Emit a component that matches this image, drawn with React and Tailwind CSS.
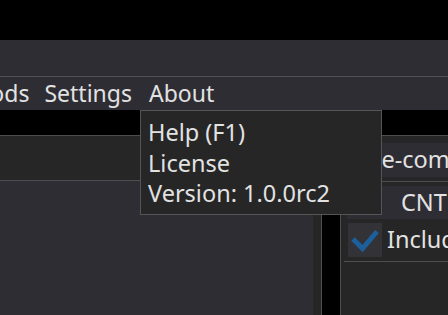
export default function App() {
  return (
    <div className="relative w-[448px] h-[315px] overflow-hidden bg-black flex flex-col font-['Noto_Sans',sans-serif] text-[23.5px] text-[#e2e2e2] whitespace-nowrap">
      <div className="h-[40px] shrink-0 bg-black" />
      <div className="h-[37px] shrink-0 bg-[#2e2d33] border-b border-[#505055]" />
      <div className="h-[33px] shrink-0 bg-[#2e2d33] flex items-center gap-[18px] text-[23px]">
        <span className="ml-[-66px]">Methods</span>
        <span className="ml-[-3px]">Settings</span>
        <span className="ml-[-1px]">About</span>
      </div>
      <div className="flex-1 flex min-h-0">
        <div className="w-[322px] flex flex-col">
          <div className="h-[25px] bg-black" />
          <div className="h-[46px] bg-[#262626] border-y border-[#4e4e4e]" />
          <div className="flex-1 flex">
            <div className="flex-1 bg-[#2e2d33]" />
            <div className="w-[8px] bg-[#262626]" />
            <div className="w-px bg-[#4e4e4e]" />
          </div>
        </div>
        <div className="w-[18px] bg-black" />
        <div className="flex-1 flex flex-col border-l border-[#4e4e4e] min-w-0">
          <div className="h-[25px] bg-black" />
          <div className="flex-1 bg-[#262626] border-t border-[#4e4e4e] flex flex-col overflow-hidden">
            <div className="mt-[7px] ml-[6px] h-[34px] bg-[#2e2d33] flex items-center pl-[11px]">Pre-compute</div>
            <div className="mt-[4px] ml-[3px] h-px bg-[#4e4e4e]" />
            <div className="mt-[4px] ml-[6px] h-[33px] bg-[#2e2d33] flex items-center pl-[54px]">CNT</div>
            <div className="mt-[4px] ml-[7px] h-[34px] flex items-center gap-[5px]">
              <div className="w-[34px] h-[34px] bg-[#323237] flex items-center justify-center shrink-0">
                <svg width="34" height="34" viewBox="0 0 34 34">
                  <path d="M5 16 L14.5 25.5 L29 8.5" fill="none" stroke="#1d5f9b" strokeWidth="5" />
                </svg>
              </div>
              <span>Include</span>
            </div>
            <div className="mt-[4px] ml-[3px] h-px bg-[#4e4e4e]" />
          </div>
        </div>
      </div>
      <div className="absolute z-10 left-[140px] top-[110px] w-[242px] h-[105px] border border-[#555555] bg-[#262626] pl-[7px] pt-[6px] leading-[30.5px] flex flex-col">
        <span>Help (F1)</span>
        <span>License</span>
        <span>Version: 1.0.0rc2</span>
      </div>
    </div>
  );
}
